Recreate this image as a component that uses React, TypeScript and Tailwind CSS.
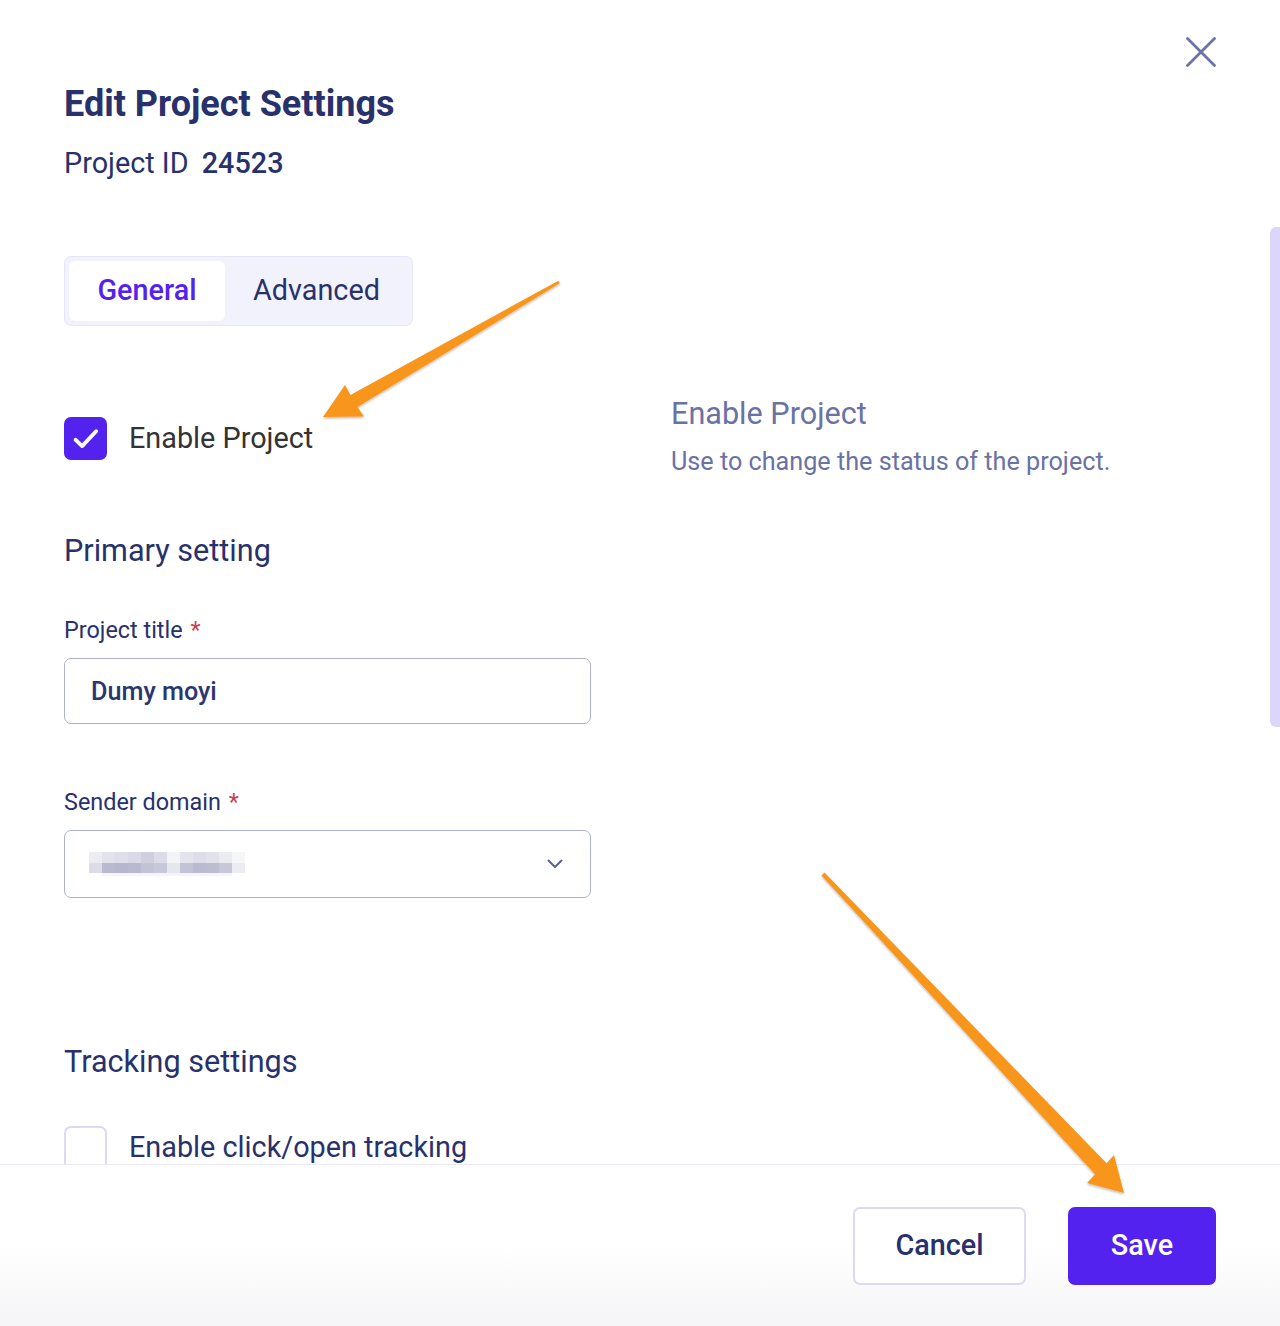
import React from "react";

const navy = "text-[#28316b]";

function Check({ on }: { on: boolean }) {
  if (!on)
    return <div className="w-[43px] h-[43px] shrink-0 rounded-[7px] border-2 border-[#dcd8f8] bg-white"></div>;
  return (
    <div className="w-[43px] h-[43px] shrink-0 rounded-[7px] bg-[#5322ef] flex items-center justify-center">
      <svg width="32" height="32" viewBox="0 0 24 24" fill="none">
        <path d="M4.2 12.6l4.9 4.7L19.6 6.2" stroke="#fff" strokeWidth="2.9" strokeLinecap="round" strokeLinejoin="round" />
      </svg>
    </div>
  );
}

function Blurred() {
  const top = ["#ececf3", "#e3e3ee", "#dfdfeb", "#d9d9e7", "#cfcfe0", "#dcdce9", "#f4f4f8", "#e4e4ee", "#dedeea", "#e2e2ed", "#ebebf2", "#f6f6f9"];
  const bottom = ["#dcdce8", "#b9b9d0", "#b6b6ce", "#b9b9d0", "#c3c3d7", "#c8c8da", "#e6e6ee", "#c3c3d7", "#babad0", "#bdbdd2", "#c7c7d9", "#ececf2"];
  return (
    <svg width="156" height="24" viewBox="0 0 156 24">
      {top.map((c, i) => (
        <rect key={"t" + i} x={i * 13} y={0} width={13} height={11} fill={c} />
      ))}
      {bottom.map((c, i) => (
        <rect key={"b" + i} x={i * 13} y={11} width={13} height={10} fill={c} />
      ))}
      <rect x={13} y={21} width={130} height={3} fill="#f5f5f9" />
    </svg>
  );
}

function Arrows() {
  return (
    <svg className="absolute inset-0 pointer-events-none" width="1280" height="1326" viewBox="0 0 1280 1326">
      <defs>
        <filter id="sh" x="-10%" y="-10%" width="120%" height="120%">
          <feDropShadow dx="0" dy="1.5" stdDeviation="1.2" floodColor="#000" floodOpacity="0.28" />
        </filter>
      </defs>
      <polygon
        filter="url(#sh)"
        fill="#f8961f"
        points="558.3,280.7 350.5,394.9 345,385 323,417 364,416.5 357.5,407.1 559.7,283.3"
      />
      <polygon
        filter="url(#sh)"
        fill="#f8961f"
        points="824.5,872.6 1106.6,1163.3 1114,1155 1124,1193 1087,1183 1095,1174.3 821.5,875.4"
      />
    </svg>
  );
}

export default function App() {
  return (
    <div className="relative w-full h-[1326px] flex flex-col bg-white overflow-hidden font-[family-name:Roboto,sans-serif]">
      <div className="flex-1 flex overflow-hidden">
        <div className="flex-1 pl-16 pr-[54px]">
          <div className="flex justify-end pt-[37px]">
            <button className="w-[30px] h-[30px]">
              <svg width="30" height="30" viewBox="0 0 30 30">
                <path d="M1.5 1.5L28.5 28.5M28.5 1.5L1.5 28.5" stroke="#6b73a6" strokeWidth="2.8" strokeLinecap="round" />
              </svg>
            </button>
          </div>
          <h1 className={`mt-[15px] text-[36px] leading-[44px] font-bold ${navy}`}>Edit Project Settings</h1>
          <p className={`mt-[19px] text-[28.8px] leading-[36px] ${navy}`}>
            Project ID <span className="ml-[6px] font-medium">24523</span>
          </p>

          <div className="mt-[75px] inline-flex h-[70px] p-[4px] rounded-[7px] border border-[#e6e7f6] bg-[#f1f2fb]">
            <button className="w-[156px] h-[60px] rounded-[6px] bg-white text-[28.8px] font-medium text-[#5322ef]">General</button>
            <button className={`w-[183px] h-[60px] text-[28.8px] ${navy}`}>Advanced</button>
          </div>

          <div className="mt-[69px] flex gap-[80px]">
            <div className="w-[527px] shrink-0 pt-[22px]">
              <div className="flex items-center gap-[22px]">
                <Check on />
                <span className="text-[28.8px] text-[#333333]">Enable Project</span>
              </div>

              <h2 className={`mt-[72px] text-[30.6px] leading-[38px] ${navy}`}>Primary setting</h2>

              <label className={`block mt-[45px] text-[23.4px] leading-[30px] ${navy}`}>
                Project title <span className="ml-[2px] text-[#d23a55]">*</span>
              </label>
              <input
                readOnly
                defaultValue="Dumy moyi"
                className="mt-[13px] w-full h-[66px] rounded-[7px] border border-[#aeb1d1] pl-[26px] text-[25.2px] font-medium text-[#2d356f] outline-none"
              />

              <label className={`block mt-[63px] text-[23.4px] leading-[30px] ${navy}`}>
                Sender domain <span className="ml-[2px] text-[#d23a55]">*</span>
              </label>
              <div className="mt-[13px] h-[68px] rounded-[7px] border border-[#aeb1d1] pl-[24px] pr-[27px] flex items-center justify-between">
                <Blurred />
                <svg width="16" height="10" viewBox="0 0 16 10">
                  <path d="M1.5 1.5L8 8l6.5-6.5" stroke="#5b6391" strokeWidth="2" fill="none" strokeLinecap="round" strokeLinejoin="round" />
                </svg>
              </div>

              <h2 className={`mt-[145px] text-[30.6px] leading-[38px] ${navy}`}>Tracking settings</h2>
              <div className="mt-[45px] flex items-center gap-[22px]">
                <Check on={false} />
                <span className={`text-[28.8px] ${navy}`}>Enable click/open tracking</span>
              </div>
            </div>

            <div className="flex-1 text-[#6a72a4]">
              <h3 className="text-[30.6px] leading-[38px]">Enable Project</h3>
              <p className="mt-[13px] text-[25.2px] leading-[32px]">Use to change the status of the project.</p>
            </div>
          </div>
        </div>
        <div className="w-[10px] shrink-0 pt-[227px]">
          <div className="h-[500px] rounded-l-[6px] bg-[#dcd6fa]"></div>
        </div>
      </div>

      <div className="h-[162px] shrink-0 border-t border-[#e9e7f9] bg-gradient-to-b from-white via-white to-[#f5f5f7] flex justify-end items-start gap-[42px] pt-[42px] pr-16">
        <button className={`w-[173px] h-[78px] rounded-[7px] border-2 border-[#ddd9f5] bg-white text-[28.8px] font-medium ${navy}`}>Cancel</button>
        <button className="w-[148px] h-[78px] rounded-[7px] bg-[#5322ef] text-[28.8px] font-medium text-white">Save</button>
      </div>

      <Arrows />
    </div>
  );
}
